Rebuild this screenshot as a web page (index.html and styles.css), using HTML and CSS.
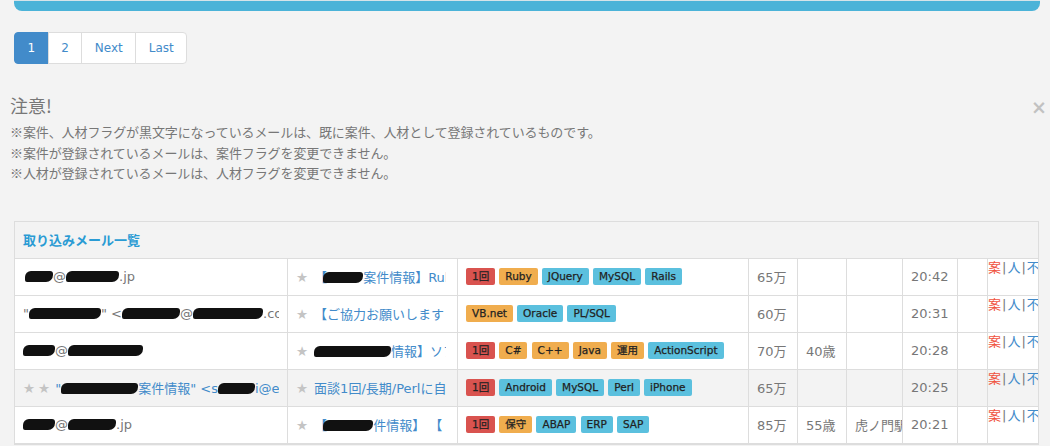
FILE: index.html
```html
<!DOCTYPE html>
<html lang="ja">
<head>
<meta charset="utf-8">
<title>取り込みメール一覧</title>
<link rel="stylesheet" href="styles.css">
</head>
<body>
<div class="topbar"></div>

<ul class="pagination">
  <li class="active"><a href="#">1</a></li>
  <li><a href="#">2</a></li>
  <li><a href="#">Next</a></li>
  <li><a href="#">Last</a></li>
</ul>

<div class="alert">
  <button class="close" type="button">×</button>
  <h4>注意!</h4>
  <p>※案件、人材フラグが黒文字になっているメールは、既に案件、人材として登録されているものです。<br>※案件が登録されているメールは、案件フラグを変更できません。<br>※人材が登録されているメールは、人材フラグを変更できません。</p>
</div>

<div class="panel">
  <div class="panel-heading">取り込みメール一覧</div>
  <table class="mails">
    <colgroup>
      <col class="c-from"><col class="c-subject"><col class="c-tags"><col class="c-price"><col class="c-age"><col class="c-place"><col class="c-time"><col class="c-blank"><col class="c-flag">
    </colgroup>
    <tbody>
      <tr>
        <td class="from"><div class="cut"><span class="blk ml2 w28"></span>@<span class="blk w53"></span>.jp</div></td>
        <td class="subject"><div class="cut"><span class="star">★</span><a href="#">【<span class="blk ov w40"></span>案件情報】Ruby/JQuery/MySQL</a></div></td>
        <td class="tags"><span class="label danger">1回</span> <span class="label warning">Ruby</span> <span class="label info">JQuery</span> <span class="label info">MySQL</span> <span class="label info">Rails</span></td>
        <td>65万</td><td></td><td></td><td>20:42</td><td></td>
        <td class="flags"><a class="f-an" href="#">案</a>|<a href="#">人</a>|<a href="#">不要</a></td>
      </tr>
      <tr>
        <td class="from"><div class="cut">"<span class="blk w72"></span>" &lt;<span class="blk w58"></span>@<span class="blk w70"></span>.com&gt;</div></td>
        <td class="subject"><div class="cut"><span class="star">★</span><a href="#">【ご協力お願いします！】VB.net</a></div></td>
        <td class="tags"><span class="label warning">VB.net</span> <span class="label info">Oracle</span> <span class="label info">PL/SQL</span></td>
        <td>60万</td><td></td><td></td><td>20:31</td><td></td>
        <td class="flags"><a class="f-an" href="#">案</a>|<a href="#">人</a>|<a href="#">不要</a></td>
      </tr>
      <tr>
        <td class="from"><div class="cut"><span class="blk w32"></span>@<span class="blk w75"></span></div></td>
        <td class="subject"><div class="cut"><span class="star">★</span><a href="#"><span class="blk w77"></span>情報】ソフトウェア開発</a></div></td>
        <td class="tags"><span class="label danger">1回</span> <span class="label warning">C#</span> <span class="label warning">C++</span> <span class="label warning">Java</span> <span class="label warning">運用</span> <span class="label info">ActionScript</span></td>
        <td>70万</td><td>40歳</td><td></td><td>20:28</td><td></td>
        <td class="flags"><a class="f-an" href="#">案</a>|<a href="#">人</a>|<a href="#">不要</a></td>
      </tr>
      <tr class="hl">
        <td class="from"><div class="cut"><span class="star">★</span><span class="star s2">★</span><a href="#">"<span class="blk w77"></span>案件情報" &lt;s<span class="blk w37"></span>i@example.jp&gt;</a></div></td>
        <td class="subject"><div class="cut"><span class="star">★</span><a href="#">面談1回/長期/Perlに自社開発</a></div></td>
        <td class="tags"><span class="label danger">1回</span> <span class="label info">Android</span> <span class="label info">MySQL</span> <span class="label info">Perl</span> <span class="label info">iPhone</span></td>
        <td>65万</td><td></td><td></td><td>20:25</td><td></td>
        <td class="flags"><a class="f-an" href="#">案</a>|<a href="#">人</a>|<a href="#">不要</a></td>
      </tr>
      <tr>
        <td class="from"><div class="cut"><span class="blk w32"></span>@<span class="blk w48"></span>.jp</div></td>
        <td class="subject"><div class="cut"><span class="star">★</span><a href="#">【<span class="blk ov w50"></span>件情報】 【</a></div></td>
        <td class="tags"><span class="label danger">1回</span> <span class="label warning">保守</span> <span class="label info">ABAP</span> <span class="label info">ERP</span> <span class="label info">SAP</span></td>
        <td>85万</td><td>55歳</td><td>虎ノ門駅</td><td>20:21</td><td></td>
        <td class="flags"><a class="f-an" href="#">案</a>|<a href="#">人</a>|<a href="#">不要</a></td>
      </tr>
    </tbody>
  </table>
</div>
</body>
</html>
```

FILE: styles.css
```css
* { box-sizing: border-box; }

html, body { margin: 0; padding: 0; }

body {
  background: #f3f3f3;
  font-family: "DejaVu Sans", "Noto Sans CJK JP", sans-serif;
  font-size: 13px;
  color: #777;
}

a { color: #428bca; text-decoration: none; }

.topbar {
  margin: 0 10px 0 14px;
  height: 11px;
  background: #4bb3d8;
  border-top: 1px solid #d6e4e9;
  border-radius: 0 0 8px 8px;
}

/* pagination */
.pagination {
  display: flex;
  list-style: none;
  margin: 21px 0 0 14px;
  padding: 0;
}
.pagination a {
  display: block;
  height: 32px;
  line-height: 30px;
  padding: 0 12.5px;
  font-size: 12px;
  color: #428bca;
  background: #fff;
  border: 1px solid #ddd;
  margin-left: -1px;
}
.pagination li:first-child a { margin-left: 0; border-radius: 4px 0 0 4px; }
.pagination li:last-child a { border-radius: 0 4px 4px 0; }
.pagination .active a { background: #428bca; border-color: #428bca; color: #fff; }

/* alert */
.alert {
  margin-top: 31px;
  padding: 0 3px 0 10px;
  color: #777;
  font-family: "Noto Sans CJK JP", sans-serif;
}
.alert h4 {
  margin: 0;
  font-size: 18px;
  font-weight: normal;
  line-height: 20px;
}
.alert p {
  margin: 7px 0 0;
  font-size: 13px;
  line-height: 20.5px;
  letter-spacing: -0.1px;
}
.close {
  float: right;
  margin-top: 3px;
  padding: 0;
  border: 0;
  background: none;
  font-family: "DejaVu Sans", sans-serif;
  font-size: 19px;
  font-weight: bold;
  line-height: 1;
  color: #000;
  opacity: 0.2;
}

/* panel + table */
.panel {
  margin: 37px 11px 0 14px;
  background: #fff;
  border: 1px solid #ddd;
  overflow: hidden;
}
.panel-heading {
  height: 37px;
  line-height: 36px;
  padding: 0 8px;
  background: #f3f3f3;
  border-bottom: 1px solid #ddd;
  font-family: "Noto Sans CJK JP", sans-serif;
  font-weight: bold;
  color: #2a9bd4;
}

.mails {
  table-layout: fixed;
  border-collapse: separate;
  border-spacing: 0;
  width: 1053px;
}
.c-from { width: 273px; }
.c-subject { width: 170px; }
.c-tags { width: 291px; }
.c-price { width: 49px; }
.c-age { width: 49px; }
.c-place { width: 56px; }
.c-time { width: 55px; }
.c-blank { width: 30px; }
.c-flag { width: 80px; }

.mails td {
  height: 37px;
  padding: 0 8px;
  border-right: 1px solid #ddd;
  border-bottom: 1px solid #ddd;
  white-space: nowrap;
  overflow: hidden;
  vertical-align: middle;
  color: #777;
}
.mails td.subject { padding-right: 11px; }
.mails tr.hl td { background: #f3f3f3; }

.cut {
  overflow: hidden;
  white-space: nowrap;
}

.blk {
  display: inline-block;
  height: 11px;
  background: #111;
  border-radius: 6px 3px 7px 2px;
  vertical-align: -1px;
}
.blk.ml2 { margin-left: 2px; }
.blk.ov { margin-left: -4px; }
.w28 { width: 28px; }
.w32 { width: 32px; }
.w37 { width: 37px; }
.w40 { width: 40px; }
.w48 { width: 48px; }
.w50 { width: 50px; }
.w53 { width: 53px; }
.w58 { width: 58px; }
.w70 { width: 70px; }
.w72 { width: 72px; }
.w75 { width: 75px; }
.w77 { width: 77px; }

.star {
  color: #c4c4c4;
  font-size: 13.5px;
  margin-right: 4px;
}
.star.s2 { margin-left: -1px; margin-right: 5px; }
.subject .star { margin-right: 6px; }

.label {
  display: inline-block;
  height: 17px;
  line-height: 17px;
  padding: 0 6px;
  font-size: 10.5px;
  color: #222;
  border-radius: 2px;
  -webkit-text-stroke: 0.25px #222;
  vertical-align: middle;
}
.label.danger { background: #d9534f; }
.label.warning { background: #f0ad4e; }
.label.info { background: #5bc0de; }

.mails td.flags {
  vertical-align: top;
  padding: 0;
  line-height: 18px;
  color: #777;
}
.flags a { padding: 0 1px; }
.flags a.f-an { padding-left: 0; color: #f0523e; }
```
